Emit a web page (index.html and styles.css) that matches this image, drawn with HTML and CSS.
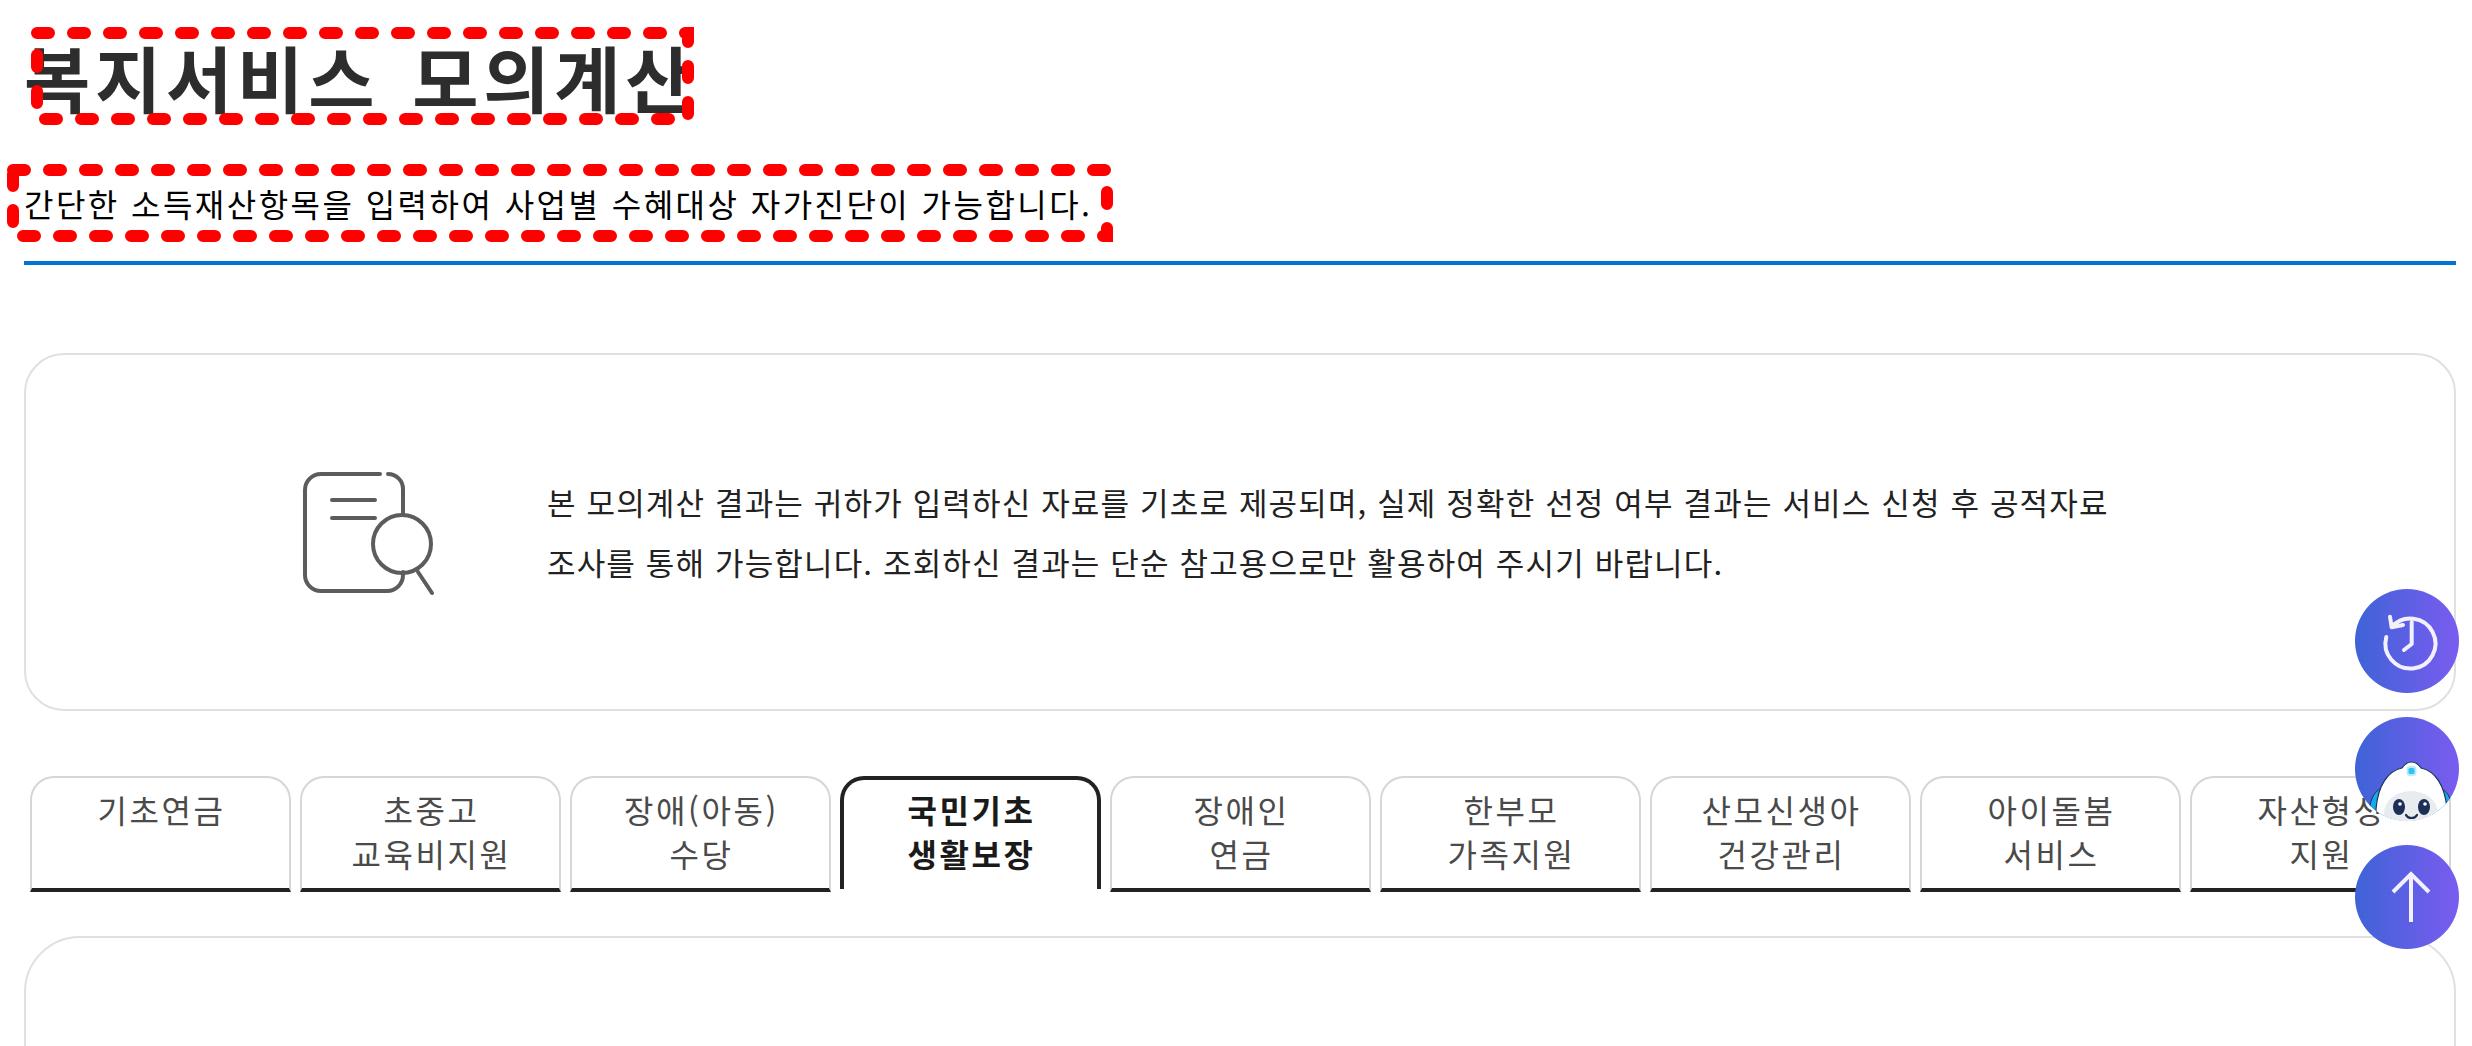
FILE: index.html
```
<!DOCTYPE html>
<html lang="ko">
<head>
<meta charset="utf-8">
<title>복지서비스 모의계산</title>
<link rel="stylesheet" href="styles.css">
</head>
<body>
<main class="page">
  <h1 class="title">복지서비스 모의계산<svg class="mark mark-title" width="663" height="98" viewBox="0 0 663 98"><rect x="6" y="6" width="651" height="86"/></svg></h1>
  <p class="lead">간단한 소득재산항목을 입력하여 사업별 수혜대상 자가진단이 가능합니다.<svg class="mark mark-lead" width="1107" height="78" viewBox="0 0 1107 78"><rect x="6" y="6" width="1094" height="66"/></svg></p>
  <hr class="rule">
  <section class="notice">
    <svg class="notice-icon" width="140" height="130" viewBox="0 0 140 130">
      <path d="M82 7H23A16 16 0 0 0 7 23V108A16 16 0 0 0 23 124H89A16 16 0 0 0 105 108V105"/>
      <path d="M90 7A15 15 0 0 1 105 22V47"/>
      <path d="M34 33H77M34 51H77"/>
      <circle cx="104" cy="77" r="29"/>
      <path d="M120 105L134 126"/>
    </svg>
    <p class="notice-text">본 모의계산 결과는 귀하가 입력하신 자료를 기초로 제공되며, 실제 정확한 선정 여부 결과는 서비스 신청 후 공적자료<br>조사를 통해 가능합니다. 조회하신 결과는 단순 참고용으로만 활용하여 주시기 바랍니다.</p>
  </section>
  <nav class="tabs">
    <a class="tab">기초연금</a>
    <a class="tab">초중고<br>교육비지원</a>
    <a class="tab">장애(아동)<br>수당</a>
    <a class="tab tab-active">국민기초<br>생활보장</a>
    <a class="tab">장애인<br>연금</a>
    <a class="tab">한부모<br>가족지원</a>
    <a class="tab">산모신생아<br>건강관리</a>
    <a class="tab">아이돌봄<br>서비스</a>
    <a class="tab">자산형성<br>지원</a>
  </nav>
  <section class="panel"></section>
</main>
<aside class="fabs">
  <a class="fab">
    <svg width="104" height="104" viewBox="0 0 104 104">
      <path class="fab-line" d="M36.700 38A25 25 0 1 1 31.300 48"/>
      <path class="fab-line" d="M35 27.700L36.700 38.300L48 36"/>
      <path class="fab-line" d="M56.700 33V55L49 61"/>
    </svg>
  </a>
  <a class="fab">
    <svg width="104" height="104" viewBox="0 0 104 104">
      <path class="bot-ear" d="M14 100C14 82 20 72 30 70L36 104H14Z"/>
      <path class="bot-ear" d="M98 100C98 82 92 72 82 70L76 104H98Z"/>
      <path class="bot-head" d="M56.500 45C61 45 64 48 66 51C80 54 90 68 92 92C92 100 90 108 88 112H25C23 108 21 100 21 92C23 68 33 54 47 51C49 48 52 45 56.500 45Z"/>
      <ellipse class="bot-face" cx="56" cy="96" rx="27" ry="22"/>
      <rect class="bot-gem" x="52.500" y="50" width="8" height="8" rx="2.500"/>
      <ellipse class="bot-eye" cx="44" cy="90" rx="6" ry="8"/>
      <ellipse class="bot-eye" cx="69" cy="90" rx="6" ry="8"/>
      <circle class="bot-shine" cx="45" cy="87" r="1.800"/>
      <circle class="bot-shine" cx="70" cy="87" r="1.800"/>
      <path class="bot-smile" d="M51 98C53 102 60 102 62 98"/>
    </svg>
  </a>
  <a class="fab">
    <svg width="104" height="104" viewBox="0 0 104 104">
      <path class="fab-line fab-arrow" d="M56 28V77M38 47L56 29L74 47"/>
    </svg>
  </a>
</aside>
</body>
</html>
```

FILE: styles.css
```
html, body {
  margin: 0;
  height: 100%;
  overflow: hidden;
  background: #fff;
}

body {
  font-family: "Noto Sans CJK KR", "Noto Sans", sans-serif;
  color: #222;
}

.page {
  padding: 27px 16px 0 24px;
}

.title {
  position: relative;
  margin: 0;
  height: 98px;
  font-size: 72px;
  font-weight: 700;
  letter-spacing: 4.8px;
  word-spacing: 8px;
  line-height: 98px;
  color: #2d2d2d;
  white-space: nowrap;
}

.lead {
  position: relative;
  margin: 39px 0 0;
  height: 78px;
  font-size: 32px;
  letter-spacing: 2.45px;
  line-height: 78px;
  color: #000;
  white-space: nowrap;
}

.mark {
  position: absolute;
  top: 0;
  fill: none;
  stroke: #f00;
  stroke-width: 12;
  stroke-linecap: round;
  stroke-dasharray: 12 24;
}

.mark-title { left: 7px; }
.mark-lead { left: -17px; }

.rule {
  margin: 19px 0 0;
  height: 4px;
  border: 0;
  background: #0074d4;
}

.notice {
  display: flex;
  align-items: center;
  box-sizing: border-box;
  height: 358px;
  margin-top: 88px;
  padding-left: 272px;
  border: 2px solid #e0e0e0;
  border-radius: 40px;
}

.notice-icon {
  flex: none;
  margin-right: 109px;
  fill: none;
  stroke: #5c5c5c;
  stroke-width: 4;
  stroke-linecap: round;
}

.notice-text {
  margin: 0;
  font-size: 31px;
  letter-spacing: 1.15px;
  line-height: 60px;
  color: #222;
  white-space: nowrap;
}

.tabs {
  display: flex;
  gap: 9px;
  margin-top: 65px;
  padding-left: 6px;
}

.tab {
  box-sizing: border-box;
  width: 261px;
  height: 116px;
  padding: 9px 0 0 2px;
  border: 2px solid #d6d6d6;
  border-bottom: 4px solid #222;
  border-radius: 24px 24px 0 0;
  font-size: 32px;
  letter-spacing: 2.6px;
  line-height: 44px;
  text-align: center;
  color: #4a4a4a;
}

.tab-active {
  height: 113px;
  padding-top: 7px;
  border: 4px solid #222;
  border-bottom: 0;
  font-weight: 700;
  color: #1a1a1a;
}

.panel {
  box-sizing: border-box;
  height: 300px;
  margin-top: 44px;
  border: 2px solid #e0e0e0;
  border-radius: 56px;
}

.fabs {
  position: fixed;
  top: 589px;
  right: 13px;
  display: flex;
  flex-direction: column;
  gap: 24px;
}

.fab {
  display: block;
  width: 104px;
  height: 104px;
  overflow: hidden;
  border-radius: 50%;
  background: linear-gradient(90deg, #3f63d7, #7a5cf0);
}

.fab svg {
  display: block;
}

.fab-line {
  fill: none;
  stroke: #f3f1ff;
  stroke-width: 4;
  stroke-linecap: round;
  stroke-linejoin: round;
}

.fab-arrow {
  stroke-linecap: butt;
  stroke-linejoin: miter;
}

.bot-ear { fill: #16a9ee; stroke: #1d3557; stroke-width: 1; }
.bot-head { fill: #fff; stroke: #1d3557; stroke-width: 1.200; }
.bot-face { fill: #e9ecef; }
.bot-gem { fill: #2cc5f5; stroke: #b8ecfb; stroke-width: 2; }
.bot-eye { fill: #1d2f57; }
.bot-shine { fill: #fff; }
.bot-smile { fill: none; stroke: #1d2f57; stroke-width: 2.200; stroke-linecap: round; }
```
